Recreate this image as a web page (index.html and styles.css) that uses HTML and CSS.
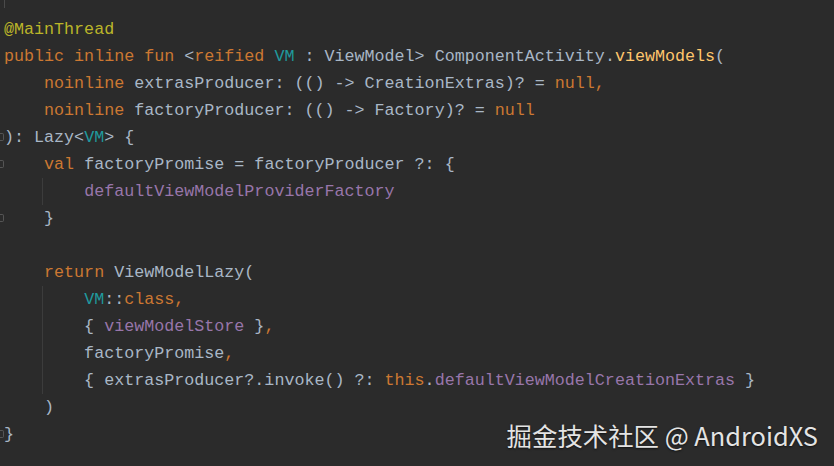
FILE: index.html
```html
<!DOCTYPE html>
<html>
<head>
<meta charset="utf-8">
<link rel="stylesheet" href="styles.css">
</head>
<body>
<div class="editor">
  <span class="topmark"></span>
  <div class="code">
    <div class="ln"><span class="an">@MainThread</span></div>
    <div class="ln"><span class="kw">public inline fun </span>&lt;<span class="kw">reified </span><span class="tp">VM</span> : ViewModel&gt; ComponentActivity.<span class="fn">viewModels</span>(</div>
    <div class="ln">    <span class="kw">noinline </span>extrasProducer: (() -&gt; CreationExtras)? = <span class="kw">null,</span></div>
    <div class="ln">    <span class="kw">noinline </span>factoryProducer: (() -&gt; Factory)? = <span class="kw">null</span></div>
    <div class="ln fold">): Lazy&lt;<span class="tp">VM</span>&gt; {</div>
    <div class="ln fold">    <span class="kw">val </span>factoryPromise = factoryProducer ?: {</div>
    <div class="ln guide">        <span class="pr">defaultViewModelProviderFactory</span></div>
    <div class="ln fold">    }</div>
    <div class="ln"> </div>
    <div class="ln">    <span class="kw">return </span>ViewModelLazy(</div>
    <div class="ln guide">        <span class="tp">VM</span>::<span class="kw">class,</span></div>
    <div class="ln guide">        { <span class="pr">viewModelStore</span> }<span class="kw">,</span></div>
    <div class="ln guide">        factoryPromise<span class="kw">,</span></div>
    <div class="ln guide">        { extrasProducer?.invoke() ?: <span class="kw">this</span>.<span class="pr">defaultViewModelCreationExtras</span> }</div>
    <div class="ln">    )</div>
    <div class="ln fold">}</div>
  </div>
  <div class="watermark">掘金技术社区 @ AndroidXS</div>
</div>
</body>
</html>
```
FILE: styles.css
```css
html, body {
  margin: 0;
  padding: 0;
  background: #2b2b2b;
}
.editor {
  position: relative;
  width: 834px;
  height: 466px;
  overflow: hidden;
  background: #2b2b2b;
}
.topmark {
  position: absolute;
  left: 4px;
  top: 0;
  width: 1px;
  height: 8px;
  background: #4a4a4a;
}
.code {
  padding: 16px 0 0 4px;
  font-family: "Liberation Mono", "DejaVu Sans Mono", monospace;
  font-size: 16.7px;
  color: #a9b7c6;
}
.ln {
  position: relative;
  height: 27px;
  line-height: 27px;
  white-space: pre;
}
.fold::before {
  content: "";
  position: absolute;
  left: -4px;
  top: 9px;
  width: 4px;
  height: 8px;
  border: 1px solid #555;
  border-left: none;
  border-radius: 0 2px 2px 0;
  box-sizing: border-box;
}
.guide::after {
  content: "";
  position: absolute;
  left: 38px;
  top: 0;
  width: 1px;
  height: 27px;
  background: #3c3c3c;
}
.an { color: #bbb529; }
.kw { color: #cc7832; }
.tp { color: #20999d; }
.fn { color: #ffc66d; }
.pr { color: #9876aa; }
.watermark {
  position: absolute;
  right: 16px;
  bottom: 15px;
  font-family: "Noto Sans CJK SC", "Noto Sans", sans-serif;
  font-size: 25.4px;
  line-height: 32px;
  color: #e4e4e4;
  text-shadow: 0 1px 2px rgba(0,0,0,0.6);
}
```
